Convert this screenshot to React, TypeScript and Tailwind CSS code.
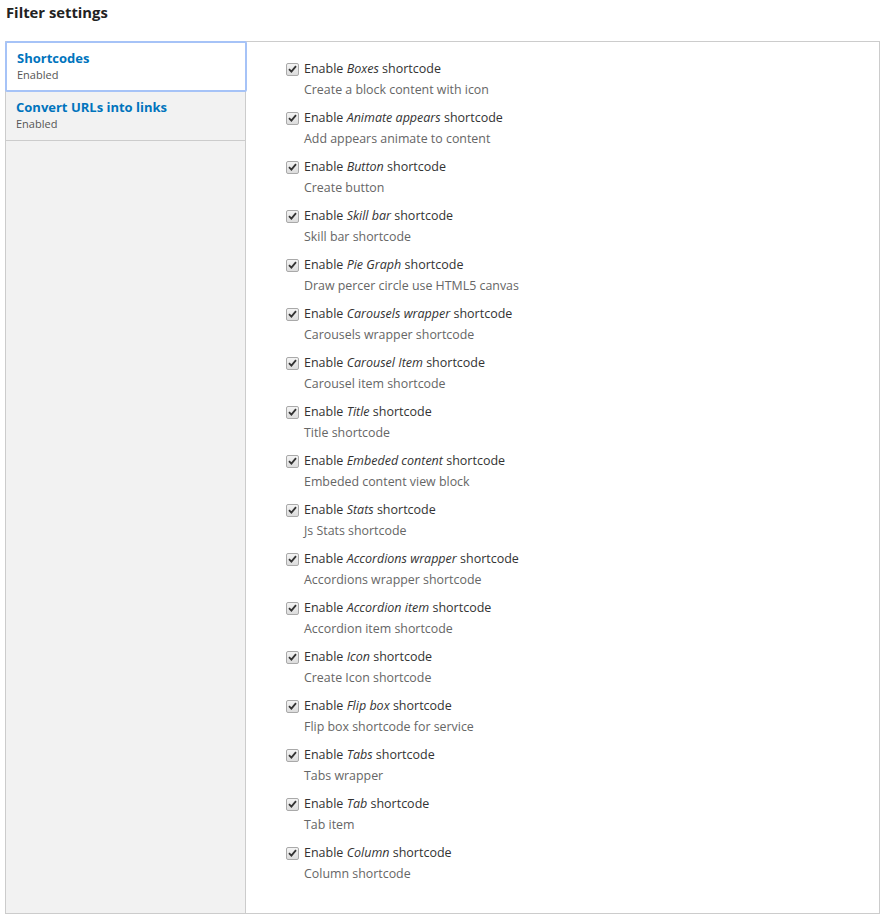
const ITEMS: [string, string][] = [
  ["Boxes", "Create a block content with icon"],
  ["Animate appears", "Add appears animate to content"],
  ["Button", "Create button"],
  ["Skill bar", "Skill bar shortcode"],
  ["Pie Graph", "Draw percer circle use HTML5 canvas"],
  ["Carousels wrapper", "Carousels wrapper shortcode"],
  ["Carousel Item", "Carousel item shortcode"],
  ["Title", "Title shortcode"],
  ["Embeded content", "Embeded content view block"],
  ["Stats", "Js Stats shortcode"],
  ["Accordions wrapper", "Accordions wrapper shortcode"],
  ["Accordion item", "Accordion item shortcode"],
  ["Icon", "Create Icon shortcode"],
  ["Flip box", "Flip box shortcode for service"],
  ["Tabs", "Tabs wrapper"],
  ["Tab", "Tab item"],
  ["Column", "Column shortcode"],
];

function Check() {
  return (
    <span className="flex h-[13px] w-[13px] shrink-0 items-center justify-center rounded-[2px] border border-[#a9a9a9] bg-gradient-to-b from-[#f4f4f4] to-[#dcdcdc]">
      <svg width="9" height="8" viewBox="0 0 9 8">
        <path d="M1 4.2 L3.4 6.6 L8 1.2" fill="none" stroke="#333" strokeWidth="1.8" />
      </svg>
    </span>
  );
}

export default function App() {
  return (
    <div className="h-[921px] w-[886px] bg-white font-['Open_Sans',sans-serif] text-[#333]">
      <h2 className="px-[6px] pt-[3px] text-[14.8px] font-bold leading-[18px] text-[#222]">Filter settings</h2>

      <div className="mx-[5px] mt-[20px] flex h-[873px] w-[875px] border border-[#ccc]">
        {/* Vertical tabs */}
        <div className="w-[240px] shrink-0 border-r border-[#ccc] bg-[#f2f2f2]">
          <div className="-ml-px -mt-px w-[242px] rounded-[2px] border-2 border-[#a6c3f7] bg-white px-[10px] pt-[7px] pb-[8px]">
            <p className="text-[13px] font-bold leading-[17px] text-[#0074bd]">Shortcodes</p>
            <p className="text-[11px] leading-[15px] text-[#555]">Enabled</p>
          </div>
          <div className="border-b border-[#ccc] px-[10px] pt-[7px] pb-[9px]">
            <p className="text-[13px] font-bold leading-[17px] text-[#0074bd]">Convert URLs into links</p>
            <p className="text-[11px] leading-[15px] text-[#555]">Enabled</p>
          </div>
        </div>

        {/* Settings */}
        <div className="flex flex-col pl-[40px] pt-[16px]">
          {ITEMS.map(([name, desc]) => (
            <div key={name} className="h-[49px]">
              <label className="flex h-[22px] items-center gap-[5px] text-[12.5px]">
                <Check />
                <span>
                  Enable <em className="italic">{name}</em> shortcode
                </span>
              </label>
              <p className="pl-[18px] text-[12.4px] leading-[20px] text-[#666]">{desc}</p>
            </div>
          ))}
        </div>
      </div>
    </div>
  );
}
